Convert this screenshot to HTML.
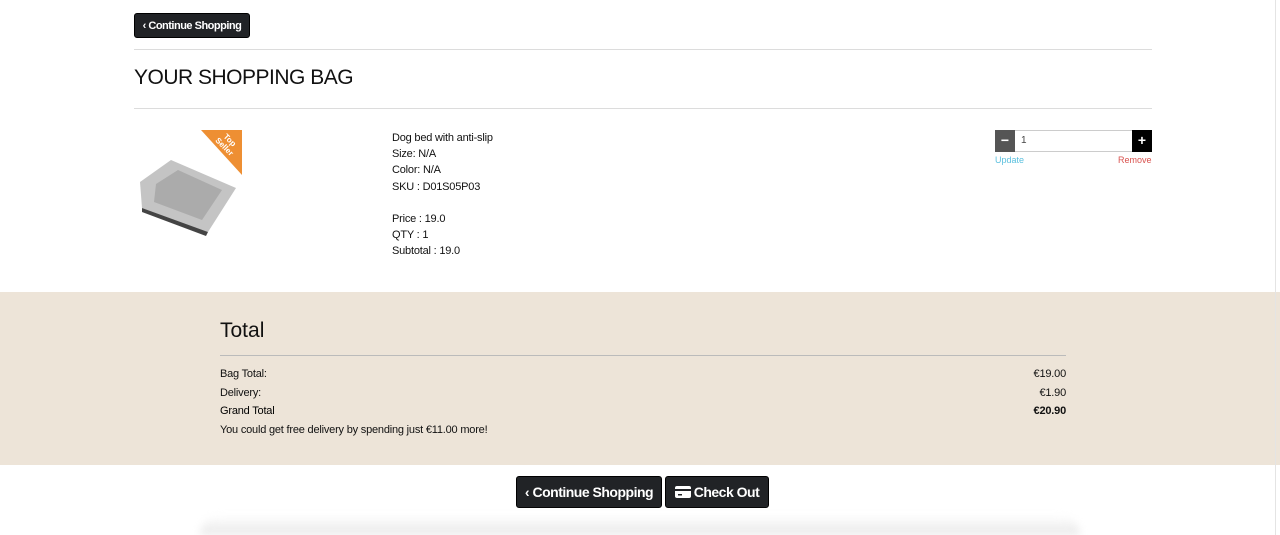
<!DOCTYPE html>
<html><head><style>
*{box-sizing:border-box;margin:0;padding:0}
html,body{width:1280px;height:535px;overflow:hidden}
body{background:#fff;font-family:"Liberation Sans",sans-serif;color:#111;position:relative}
.abs{position:absolute}
.btn{background:#212326;color:#fff;border:1px solid #000;border-radius:3px;display:flex;align-items:center;justify-content:center;font-weight:bold;letter-spacing:-0.5px}
.hr{height:1px;background:#dcdcdc;position:absolute}
.t{font-size:11px;line-height:16.2px;letter-spacing:-0.2px}
</style></head><body>
<div class="abs btn" style="left:134px;top:13px;width:116px;height:25px;font-size:11px">&#8249;&nbsp;Continue Shopping</div>
<div class="hr" style="left:134px;top:49px;width:1018px"></div>
<div class="abs" style="left:134px;top:66px;font-size:21px;letter-spacing:-0.5px">YOUR SHOPPING BAG</div>
<div class="hr" style="left:134px;top:108px;width:1018px"></div>
<svg class="abs" style="left:136px;top:130px" width="106" height="110">
<polygon points="65,0 106,0 106,45" fill="#ee8f33"/>
<text x="92" y="12" fill="#fff" font-size="8" font-weight="bold" font-family="Liberation Sans" transform="rotate(45 92 12)" text-anchor="middle">Top</text>
<text x="86" y="20" fill="#fff" font-size="8" font-weight="bold" font-family="Liberation Sans" transform="rotate(45 88 20)" text-anchor="middle">Seller</text>
<polygon points="4,52 35,30 100,58 72,102 6,78" fill="#c4c4c4"/>
<polygon points="20,54 42,40 86,60 66,90 18,72" fill="#ababab"/>
<polygon points="6,78 72,102 70,106 6,82" fill="#444"/>
</svg>
<div class="abs t" style="left:392px;top:130px">Dog bed with anti-slip<br>Size: N/A<br>Color: N/A<br>SKU : D01S05P03<br><br>Price : 19.0<br>QTY : 1<br>Subtotal : 19.0</div>
<div class="abs" style="left:995px;top:130px;width:157px;height:22px;border:1px solid #ccc"></div>
<div class="abs" style="left:995px;top:130px;width:20px;height:22px;background:#555;color:#fff;text-align:center;font-weight:bold;line-height:21px;font-size:14px">−</div>
<div class="abs" style="left:1132px;top:130px;width:20px;height:22px;background:#000;color:#fff;text-align:center;font-weight:bold;line-height:21px;font-size:14px">+</div>
<div class="abs" style="left:1021px;top:135px;font-size:10px;color:#444">1</div>
<div class="abs" style="left:995px;top:155px;font-size:9px;color:#5bc0de">Update</div>
<div class="abs" style="left:1118px;top:155px;font-size:9px;color:#d9534f">Remove</div>
<div class="abs" style="left:0;top:292px;width:1280px;height:173px;background:#ede4d8"></div>
<div class="abs" style="left:220px;top:319px;font-size:21px">Total</div>
<div class="abs" style="left:220px;top:355px;width:846px;height:1px;background:#bbb"></div>
<div class="abs t" style="left:220px;top:365px;line-height:18.5px">Bag Total:<br>Delivery:<br><span style="color:#000">Grand Total</span><br>You could get free delivery by spending just €11.00 more!</div>
<div class="abs t" style="left:966px;width:100px;top:365px;line-height:18.5px;text-align:right">€19.00<br>€1.90<br><b>€20.90</b></div>
<div class="abs btn" style="left:516px;top:476px;width:146px;height:32px;font-size:14px">&#8249;&nbsp;Continue Shopping</div>
<div class="abs btn" style="left:665px;top:476px;width:104px;height:32px;font-size:14px"><svg width="16" height="12" style="margin-right:3px"><rect x="0" y="0" width="16" height="12" rx="2" fill="#fff"/><rect x="0" y="3" width="16" height="2" fill="#212326"/><rect x="3" y="8" width="4" height="1.5" fill="#212326"/></svg>Check Out</div>
<div class="abs" style="left:200px;top:515px;width:880px;height:20px;background:linear-gradient(#fff,#e8e8e8);border-radius:30px 30px 0 0;filter:blur(4px)"></div>
<div class="abs" style="left:1275px;top:0;width:1px;height:535px;background:#e4e4e4"></div>
</body></html>
